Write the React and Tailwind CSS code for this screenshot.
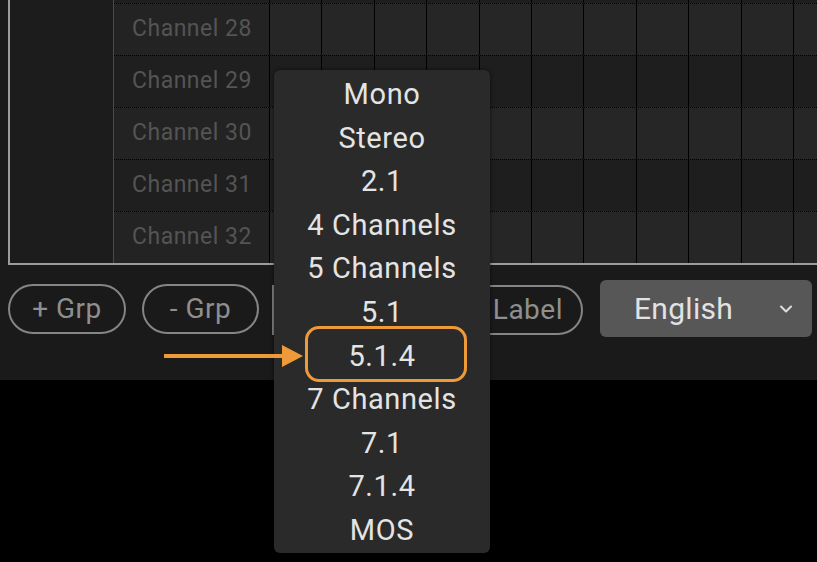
import { ChevronDown } from 'lucide-react'

const channels = [28, 29, 30, 31, 32]
const formats = ['Mono', 'Stereo', '2.1', '4 Channels', '5 Channels', '5.1', '5.1.4', '7 Channels', '7.1', '7.1.4', 'MOS']
const cols = Array.from({ length: 11 }, (_, i) => i)

function MatrixRow({ label, light, partial }) {
  return (
    <div
      className={`flex ${partial ? 'h-[3px]' : 'h-[52px] border-t border-dotted border-black'} ${
        light ? 'bg-[#262626]' : 'bg-[#1e1e1e]'
      }`}
    >
      <div
        className={`w-[156px] shrink-0 border-r border-black flex items-center pl-[18px] text-[23px] tracking-[0.5px] text-[#545454] ${
          light ? 'bg-[#232323]' : 'bg-[#1f1f1f]'
        }`}
      >
        {label}
      </div>
      {cols.map((c) => (
        <div key={c} className="w-[52.4px] shrink-0 border-r border-black" />
      ))}
    </div>
  )
}

function PillButton({ children, className }) {
  return (
    <div
      className={`h-[50px] border-2 border-[#858585] flex items-center justify-center text-[28px] tracking-[0.5px] text-[#8f8f8f] ${className}`}
    >
      {children}
    </div>
  )
}

export default function App() {
  return (
    <div className="relative w-[817px] h-[562px] overflow-hidden bg-black font-['Roboto',sans-serif]">
      {/* Routing panel */}
      <div className="h-[380px] bg-[#1a1a1a]">
        <div className="ml-[8px] flex border-l-2 border-b-2 border-[#9c9c9c] overflow-hidden">
          <div className="w-[104px] shrink-0 bg-[#1c1c1c] border-r border-[#4a4a4a]" />
          <div className="flex-1 overflow-hidden">
            <MatrixRow partial />
            {channels.map((n, i) => (
              <MatrixRow key={n} label={`Channel ${n}`} light={i % 2 === 0} />
            ))}
          </div>
        </div>

        {/* Bottom toolbar */}
        <div className="flex items-center mt-[15px] pl-[8px]">
          <PillButton className="w-[118px] rounded-full">+ Grp</PillButton>
          <PillButton className="w-[117px] ml-[16px] rounded-full">- Grp</PillButton>
          <PillButton className="w-[311px] ml-[13px] mt-[3px] rounded-r-full justify-end pr-[18px]">Show Label</PillButton>
          <div className="ml-[17px] w-[212px] h-[57px] rounded-[6px] bg-[#575757] flex items-center pl-[34px] pr-[16px] text-[30px] tracking-[0.3px] text-[#e2e2e2]">
            <span className="flex-1">English</span>
            <ChevronDown size={20} strokeWidth={2.5} className="text-[#dcdcdc]" />
          </div>
        </div>
      </div>

      {/* Channel format menu */}
      <div className="absolute left-[274px] top-[70px] w-[216px] h-[483px] rounded-[6px] bg-[#2a2a2a] pt-[3px] shadow-[0_0_4px_rgba(0,0,0,0.6)]">
        {formats.map((f) => (
          <div key={f} className="h-[43.6px] flex items-center justify-center text-[29px] tracking-[0.6px] text-[#e4e4e4]">
            {f}
          </div>
        ))}
      </div>

      {/* Callout */}
      <div className="absolute left-[305px] top-[326px] w-[162px] h-[56px] rounded-[14px] border-[3px] border-[#ee9a38]" />
      <svg className="absolute left-[160px] top-[342px]" width="146" height="28" viewBox="0 0 146 28">
        <line x1="4" y1="14" x2="126" y2="14" stroke="#ee9a38" strokeWidth="4" />
        <polygon points="122,3 143,14 122,25" fill="#ee9a38" />
      </svg>
    </div>
  )
}
